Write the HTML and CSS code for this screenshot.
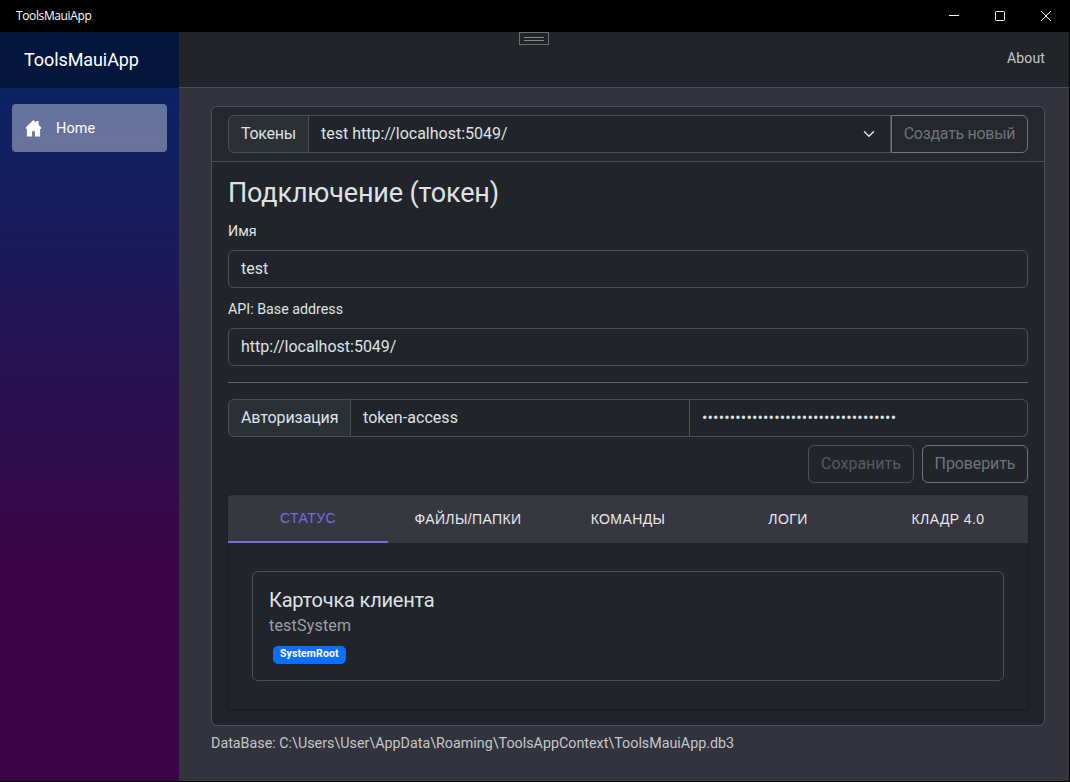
FILE: index.html
```html
<!DOCTYPE html>
<html lang="ru">
<head>
<meta charset="utf-8">
<title>ToolsMauiApp</title>
<link rel="stylesheet" href="styles.css">
</head>
<body>
<div class="window">
  <header class="titlebar">
    <span class="title">ToolsMauiApp</span>
    <div class="caption">
      <span class="cap-btn"><svg width="12" height="12" viewBox="0 0 12 12"><path d="M1 5.5H11" stroke="#fff" fill="none"/></svg></span>
      <span class="cap-btn"><svg width="12" height="12" viewBox="0 0 12 12"><rect x="1.5" y="1.5" width="9" height="9" rx="1" stroke="#fff" fill="none"/></svg></span>
      <span class="cap-btn"><svg width="12" height="12" viewBox="0 0 12 12"><path d="M1 1L11 11M11 1L1 11" stroke="#fff" fill="none"/></svg></span>
    </div>
  </header>
  <div class="app">
    <aside class="sidebar">
      <div class="brand">ToolsMauiApp</div>
      <nav class="nav">
        <a class="nav-link">
          <svg class="home" width="17" height="18" viewBox="0 0 18 18"><path fill="#fff" d="M9 .5 1 8.200V10h1v8h5.500v-5.500h3V18H16v-8h1V8.200l-2.500-2.400V1.500h-2.500v1.900z"/></svg>
          <span>Home</span>
        </a>
      </nav>
    </aside>
    <main class="main">
      <div class="topbar">
        <div class="grip"><i></i><i></i></div>
        <a class="about">About</a>
      </div>
      <div class="content">
        <section class="card">
          <div class="card-header">
            <div class="group">
              <span class="addon addon-tok">Токены</span>
              <div class="select"><span>test http://localhost:5049/</span>
                <svg width="12" height="12" viewBox="0 0 16 16"><path d="M2 5l6 6 6-6" stroke="#dee2e6" stroke-width="2" stroke-linecap="round" stroke-linejoin="round" fill="none"/></svg>
              </div>
              <span class="btn btn-new">Создать новый</span>
            </div>
          </div>
          <div class="card-body">
            <h3 class="heading">Подключение (токен)</h3>
            <label class="label label-name">Имя</label>
            <div class="input">test</div>
            <label class="label label-api">API: Base address</label>
            <div class="input">http://localhost:5049/</div>
            <hr class="rule">
            <div class="group">
              <span class="addon addon-auth">Авторизация</span>
              <div class="cell cell-user">token-access</div>
              <div class="cell cell-pass">•••••••••••••••••••••••••••••••••••</div>
            </div>
            <div class="actions">
              <span class="btn btn-save">Сохранить</span>
              <span class="btn btn-check">Проверить</span>
            </div>
            <div class="tabs-wrap">
              <div class="tabs">
                <span class="tab active">СТАТУС</span>
                <span class="tab">ФАЙЛЫ/ПАПКИ</span>
                <span class="tab">КОМАНДЫ</span>
                <span class="tab">ЛОГИ</span>
                <span class="tab">КЛАДР 4.0</span>
              </div>
              <div class="tab-panel">
                <div class="client">
                  <div class="client-title">Карточка клиента</div>
                  <div class="client-sub">testSystem</div>
                  <span class="badge">SystemRoot</span>
                </div>
              </div>
            </div>
          </div>
        </section>
        <p class="db">DataBase: C:\Users\User\AppData\Roaming\ToolsAppContext\ToolsMauiApp.db3</p>
      </div>
    </main>
  </div>
</div>
</body>
</html>
```
FILE: styles.css
```css
* { box-sizing: border-box; }
html, body { margin: 0; height: 100%; }
body { font-family: Roboto, "Liberation Sans", sans-serif; font-size: 16px; line-height: 24px; color: #dee2e6; background: #000; overflow: hidden; }
.window { width: 1070px; height: 782px; display: flex; flex-direction: column; }
.titlebar { height: 32px; flex: none; background: #000; color: #fff; display: flex; align-items: center; justify-content: space-between; padding-left: 16px; }
.title { font-size: 12px; line-height: 16px; font-family: "Open Sans", Roboto, sans-serif; letter-spacing: -0.38px; }
.caption { display: flex; width: 138px; height: 32px; margin-right: 1px; }
.cap-btn { width: 46px; display: flex; align-items: center; justify-content: center; }
.app { flex: 1; display: flex; min-height: 0; padding: 0 1px 1px 0; }
.sidebar { width: 179px; flex: none; background: linear-gradient(180deg, #052767 0%, #3a0647 70%); }
.brand { height: 56px; background: rgba(0,0,0,.4); color: #fff; font-size: 18px; line-height: 56px; padding-left: 24px; letter-spacing: -0.08px; }
.nav { padding: 16px 12px; }
.nav-link { height: 48px; display: flex; align-items: center; gap: 14px; padding: 1px 0 0 13px; border-radius: 4px; background: rgba(255,255,255,.37); color: #fff; font-size: 14.4px; font-weight: 400; line-height: 26px; letter-spacing: 0.15px; }
.home { margin-top: -1px; }
.main { flex: 1; background: #32333d; display: flex; flex-direction: column; min-width: 0; }
.topbar { height: 56px; flex: none; background: #212529; border-bottom: 1px solid #495057; display: flex; align-items: center; justify-content: flex-end; padding: 0 24px 4px 0; position: relative; }
.grip { position: absolute; left: 340px; top: 0; width: 30px; height: 13px; border: 1px solid #6b6e72; display: flex; flex-direction: column; align-items: center; justify-content: center; gap: 2px; }
.grip i { display: block; width: 20px; height: 1px; background: #85888b; }
.about { font-size: 14px; color: #c4c7ca; letter-spacing: 0.15px; }
.content { padding: 18px 24px 0 32px; }
.card { height: 620px; background: #212529; border: 1px solid #495057; border-radius: 6px; display: flex; flex-direction: column; }
.card-header { height: 55px; flex: none; padding: 8px 16px; border-bottom: 1px solid #495057; background: #24282c; border-radius: 6px 6px 0 0; }
.card-body { padding: 15px 16px 16px; flex: 1; }
.group { display: flex; height: 38px; }
.addon { display: flex; align-items: center; padding: 0 12px; background: #2b3035; border: 1px solid #495057; border-radius: 6px 0 0 6px; color: #dee2e6; }
.addon-tok { width: 81px; letter-spacing: -0.3px; }
.addon-auth { width: 123px; letter-spacing: -0.1px; }
.select { flex: 1; display: flex; align-items: center; justify-content: space-between; padding: 0 15px 0 12px; background: #212529; border: 1px solid #495057; border-left: 0; }
.btn { display: inline-flex; align-items: center; justify-content: center; height: 38px; border: 1px solid #6c757d; border-radius: 6px; color: #6c757d; }
.btn-new { width: 137px; border-radius: 0 6px 6px 0; letter-spacing: -0.3px; }
.heading { margin: 0; font-size: 27px; letter-spacing: -0.17px; font-weight: 400; line-height: 33.6px; color: #dee2e6; }
.label { display: block; margin: 8px 0; font-size: 14.25px; line-height: 21px; }
.label-name { margin-top: 10px; }
.label-api { margin-top: 11px; }
.input { height: 38px; padding: 0 12px; line-height: 36px; background: #212529; border: 1px solid #495057; border-radius: 6px; }
.rule { margin: 16px 0; border: 0; border-top: 1px solid #5d6165; }
.cell { display: flex; align-items: center; padding: 0 12px; border: 1px solid #495057; border-left: 0; }
.cell-user { width: 339px; letter-spacing: 0.05px; }
.cell-pass { flex: 1; border-radius: 0 6px 6px 0; font-size: 16px; letter-spacing: 0.15px; }
.actions { display: flex; justify-content: flex-end; gap: 8px; margin-top: 8px; }
.btn-save { width: 106px; border-color: #495057; color: #565b60; }
.btn-check { width: 106px; letter-spacing: -0.1px; }
.tabs-wrap { margin-top: 12px; border-radius: 4px; background: #212529; box-shadow: 0 1px 3px rgba(0,0,0,.35); }
.tabs { display: flex; height: 48px; background: #373740; border-radius: 4px 4px 0 0; }
.tab { width: 160px; display: flex; align-items: center; justify-content: center; font-family: "Liberation Sans", Arial, sans-serif; font-size: 14px; font-weight: 400; color: #e6e8ea; letter-spacing: 0.4px; }
.tab.active { color: #776be7; border-bottom: 2px solid #776be7; }
.tab-panel { padding: 28px 24px; }
.client { height: 110px; padding: 16px; border: 1px solid #495057; border-radius: 6px; }
.client-title { font-size: 20px; line-height: 24px; color: #dee2e6; letter-spacing: -0.2px; }
.client-sub { margin-top: 2px; color: #99a0a6; line-height: 24px; letter-spacing: 0.2px; }
.badge { display: inline-block; margin: 8px 0 0 4px; height: 18px; padding: 0 7px; background: #0d6efd; color: #fff; border-radius: 5px; font-size: 10.5px; font-weight: 700; line-height: 16px; vertical-align: top; letter-spacing: 0.1px; }
.db { margin: 5px 0 0; font-size: 14.3px; line-height: 24px; color: #c4c7ca; }
```
